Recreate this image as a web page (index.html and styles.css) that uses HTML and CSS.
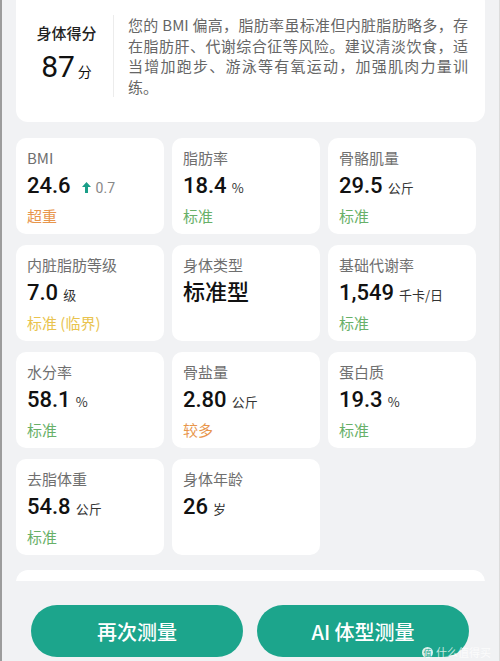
FILE: index.html
```html
<!DOCTYPE html>
<html lang="zh-CN">
<head>
    <meta charset="UTF-8">
    <meta name="viewport" content="width=device-width, initial-scale=1.0">
    <title>身体数据</title>
    <link rel="stylesheet" href="styles.css">
</head>
<body>
    <div class="screen">
        <div class="scroll">
            <section class="score-card">
                <div class="score">
                    <div class="score-title">身体得分</div>
                    <div class="score-value">87<span class="score-unit">分</span></div>
                </div>
                <p class="summary">您的 BMI 偏高，脂肪率虽标准但内脏脂肪略多，存在脂肪肝、代谢综合征等风险。建议清淡饮食，适当增加跑步、游泳等有氧运动，加强肌肉力量训练。</p>
            </section>

            <div class="metrics">
                <div class="metric">
                    <div class="label">BMI</div>
                    <div class="value">24.6
                        <span class="trend">
                            <svg width="9" height="11" viewBox="0 0 9 11"><path d="M4.5 0 L9 5 H6 V11 H3 V5 H0 Z" fill="#1a9e88"/></svg>
                            0.7
                        </span>
                    </div>
                    <div class="status orange">超重</div>
                </div>
                <div class="metric">
                    <div class="label">脂肪率</div>
                    <div class="value">18.4<span class="unit">%</span></div>
                    <div class="status green">标准</div>
                </div>
                <div class="metric">
                    <div class="label">骨骼肌量</div>
                    <div class="value">29.5<span class="unit">公斤</span></div>
                    <div class="status green">标准</div>
                </div>
                <div class="metric">
                    <div class="label">内脏脂肪等级</div>
                    <div class="value">7.0<span class="unit">级</span></div>
                    <div class="status yellow">标准 (临界)</div>
                </div>
                <div class="metric">
                    <div class="label">身体类型</div>
                    <div class="value">标准型</div>
                </div>
                <div class="metric">
                    <div class="label">基础代谢率</div>
                    <div class="value">1,549<span class="unit">千卡/日</span></div>
                    <div class="status green">标准</div>
                </div>
                <div class="metric">
                    <div class="label">水分率</div>
                    <div class="value">58.1<span class="unit">%</span></div>
                    <div class="status green">标准</div>
                </div>
                <div class="metric">
                    <div class="label">骨盐量</div>
                    <div class="value">2.80<span class="unit">公斤</span></div>
                    <div class="status orange">较多</div>
                </div>
                <div class="metric">
                    <div class="label">蛋白质</div>
                    <div class="value">19.3<span class="unit">%</span></div>
                    <div class="status green">标准</div>
                </div>
                <div class="metric">
                    <div class="label">去脂体重</div>
                    <div class="value">54.8<span class="unit">公斤</span></div>
                    <div class="status green">标准</div>
                </div>
                <div class="metric">
                    <div class="label">身体年龄</div>
                    <div class="value">26<span class="unit">岁</span></div>
                </div>
            </div>

            <div class="next-card"></div>
        </div>

        <div class="actions">
            <button class="btn">再次测量</button>
            <button class="btn">AI 体型测量</button>
            <div class="watermark"><span class="wm-icon">值</span>什么值得买</div>
        </div>
    </div>
</body>
</html>
```

FILE: styles.css
```css
* {
    box-sizing: border-box;
}
body {
    margin: 0;
    background: #f1f2f4;
    font-family: "Noto Sans CJK SC", "Noto Sans", sans-serif;
    color: #1a1a1a;
}
.screen {
    position: relative;
    width: 500px;
    height: 661px;
    display: flex;
    flex-direction: column;
    overflow: hidden;
    border-left: 2px solid #9c9c9c;
    border-right: 1px solid #dcdcdc;
}
.scroll {
    height: 581px;
    overflow: hidden;
    padding-left: 14px;
}
.score-card {
    width: 469px;
    margin-top: -10px;
    background: white;
    border-radius: 12px;
    padding: 25px 0 25px 0;
    display: flex;
}
.score {
    width: 97px;
    padding-left: 4px;
    display: flex;
    flex-direction: column;
    align-items: center;
}
.score-title {
    margin-top: 7px;
    font-size: 15px;
    line-height: 22px;
    font-weight: 500;
    color: #222;
}
.score-value {
    margin-top: 5px;
    font-family: Roboto, "Noto Sans CJK SC", sans-serif;
    font-size: 30px;
    line-height: 36px;
    color: #111;
}
.score-unit {
    font-family: "Noto Sans CJK SC", sans-serif;
    font-size: 14px;
    margin-left: 3px;
}
.summary {
    margin: 0;
    width: 355px;
    padding-left: 14px;
    border-left: 1px solid #ececec;
    font-size: 15px;
    line-height: 20.5px;
    color: #666;
    text-align: justify;
}
.metrics {
    margin-top: 16px;
    display: grid;
    grid-template-columns: repeat(3, 148px);
    grid-auto-rows: 96px;
    column-gap: 8px;
    row-gap: 11px;
}
.metric {
    background: white;
    border-radius: 10px;
    padding: 10px 11px;
}
.label {
    font-size: 15px;
    line-height: 20px;
    color: #6f6f6f;
}
.value {
    margin-top: 4px;
    font-family: Roboto, "Noto Sans CJK SC", sans-serif;
    font-size: 22px;
    line-height: 28px;
    font-weight: 500;
    color: #111;
    white-space: nowrap;
}
.unit {
    font-family: "Noto Sans CJK SC", sans-serif;
    font-size: 13px;
    font-weight: 400;
    color: #333;
    margin-left: 5px;
}
.trend {
    font-size: 14px;
    font-weight: 400;
    color: #888;
    margin-left: 6px;
}
.trend svg {
    margin-right: 1px;
}
.status {
    margin-top: 4px;
    font-size: 15px;
    line-height: 20px;
}
.orange {
    color: #e8964c;
}
.green {
    color: #68b068;
}
.yellow {
    color: #e9c34e;
}
.next-card {
    width: 469px;
    height: 120px;
    margin-top: 15px;
    background: white;
    border-radius: 12px;
}
.actions {
    flex: 1;
    display: flex;
    gap: 14px;
    padding: 24px 30px 0 29px;
}
.btn {
    flex: 1;
    height: 52px;
    border: none;
    border-radius: 26px;
    background: #1ca58c;
    color: white;
    font-family: "Noto Sans CJK SC", "Noto Sans", sans-serif;
    font-size: 20px;
    font-weight: 500;
}
.watermark {
    position: absolute;
    right: 8px;
    bottom: 2px;
    font-size: 11px;
    line-height: 14px;
    color: rgba(255, 255, 255, 0.75);
    display: flex;
    align-items: center;
    gap: 3px;
}
.wm-icon {
    width: 11px;
    height: 11px;
    border-radius: 50%;
    background: rgba(255, 255, 255, 0.85);
    color: #1ca58c;
    font-size: 8px;
    line-height: 11px;
    text-align: center;
}
```
